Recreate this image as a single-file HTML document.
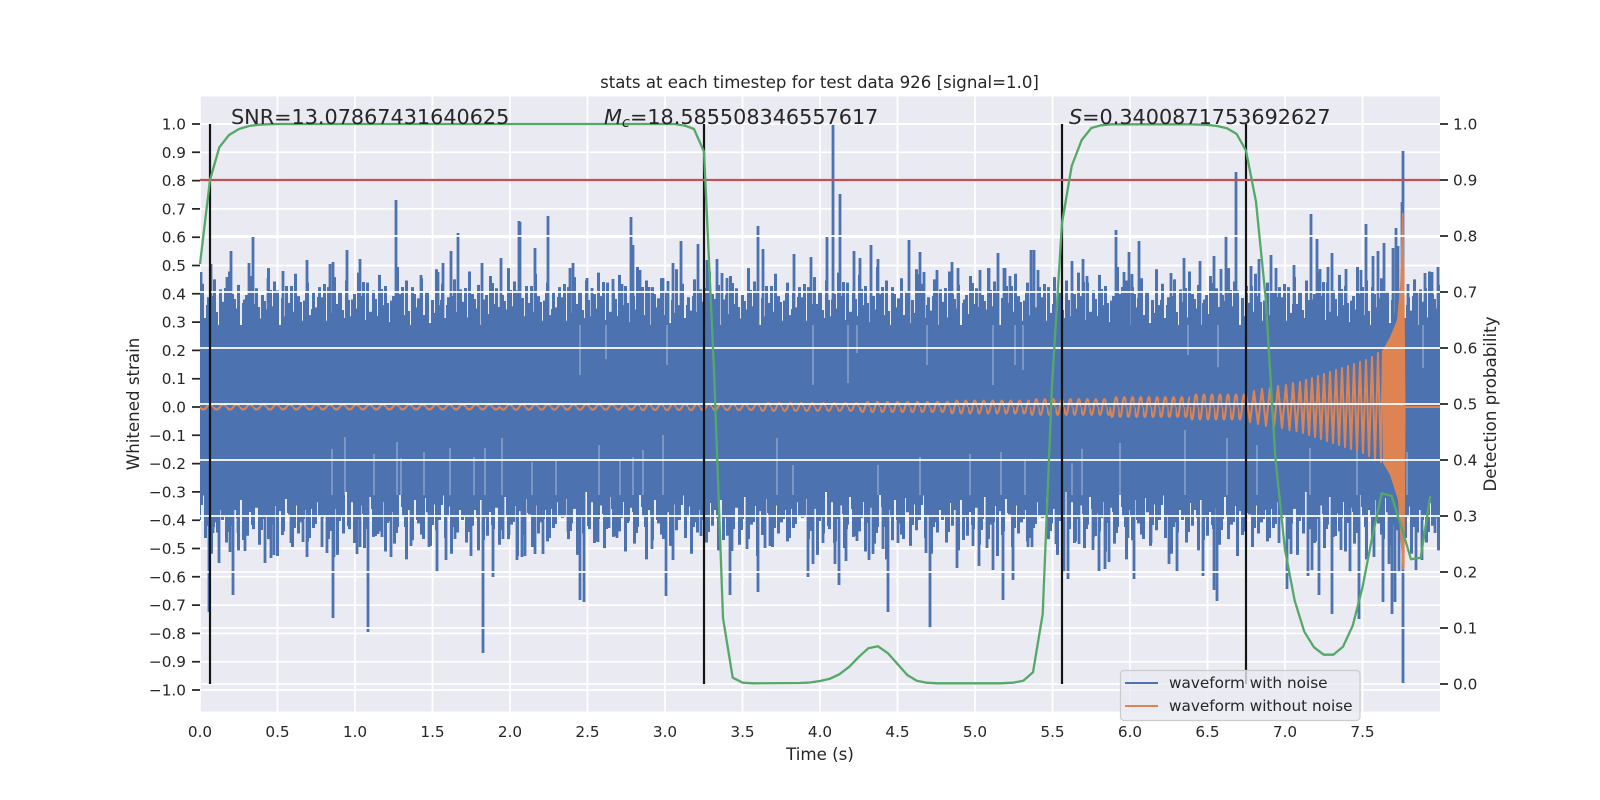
<!DOCTYPE html>
<html><head><meta charset="utf-8"><title>stats at each timestep</title>
<style>html,body{margin:0;padding:0;background:#fff}svg{display:block}text{font-family:"DejaVu Sans","Liberation Sans",sans-serif;fill:#262626}</style>
</head><body>
<svg xmlns="http://www.w3.org/2000/svg" width="1600" height="800" viewBox="0 0 1600 800">
<defs>
<clipPath id="ax"><rect x="200" y="96.5" width="1240" height="615"/></clipPath>
<path id="tt" d="M0 407V300h4V318h4V305h4V325h4V296h4V312h4V330h4V308h4V288h4V322h4V314h4V299h4V326h4V340h4V303h4V295h4V317h4V283h4V320h4V307h4V328h4V301h4V315h4V290h4V324h4V311h4V348h4V298h4V319h4V306h4V286h4V327h4V313h4V302h4V335h4V293h4V321h4V309h4V331h4V297h4V316h4V284h4V323h4V342h4V304h4V329h4V292h4V310h4V318h4V300h4V336h4V294h4V325h4V306h4V282h4V320h4V312h4V345h4V299h4V316h4V289h4V328h4V303h4V322h4V296h4V334h4V308h4V287h4V319h4V311h4V326h4V294h4V338h4V305h4V315h4V291h4V323h4V300h4V330h4V309h4V407z"/>
<path id="tb" d="M0 407V505h4V492h4V515h4V498h4V527h4V488h4V510h4V520h4V495h4V532h4V503h4V485h4V518h4V500h4V540h4V493h4V512h4V525h4V478h4V507h4V530h4V497h4V516h4V489h4V522h4V506h4V475h4V535h4V499h4V513h4V491h4V528h4V504h4V482h4V519h4V510h4V538h4V496h4V524h4V486h4V508h4V517h4V494h4V531h4V501h4V470h4V521h4V511h4V490h4V526h4V499h4V543h4V505h4V484h4V514h4V529h4V497h4V509h4V536h4V487h4V518h4V502h4V523h4V480h4V512h4V533h4V495h4V507h4V527h4V492h4V516h4V477h4V520h4V504h4V539h4V498h4V511h4V525h4V489h4V506h4V407z"/>
<g fill="none" stroke="#dd8452" stroke-width="2.08">
<pattern id="o1" patternUnits="userSpaceOnUse" x="200" y="367" width="13.3" height="80"><path d="M0 40q3.325 5 6.65 0t6.65 0"/></pattern>
<pattern id="o2" patternUnits="userSpaceOnUse" x="500" y="367" width="12.8" height="80"><path d="M0 40q3.2 5.4 6.4 0t6.4 0"/></pattern>
<pattern id="o3" patternUnits="userSpaceOnUse" x="640" y="367" width="12" height="80"><path d="M0 40q3 6 6 0t6 0"/></pattern>
<pattern id="o4" patternUnits="userSpaceOnUse" x="760" y="367" width="11" height="80"><path d="M0 40q2.75 7.6 5.5 0t5.5 0"/></pattern>
<pattern id="o5" patternUnits="userSpaceOnUse" x="860" y="367" width="10" height="80"><path d="M0 40q2.5 10 5 0t5 0"/></pattern>
<pattern id="o6" patternUnits="userSpaceOnUse" x="950" y="367" width="9" height="80"><path d="M0 40q2.25 13 4.5 0t4.5 0"/></pattern>
<pattern id="o7" patternUnits="userSpaceOnUse" x="1030" y="367" width="8.5" height="80"><path d="M0 40q2.125 16 4.25 0t4.25 0"/></pattern>
<pattern id="o8" patternUnits="userSpaceOnUse" x="1110" y="367" width="8.2" height="80"><path d="M0 40q2.05 20 4.1 0t4.1 0"/></pattern>
<pattern id="o9" patternUnits="userSpaceOnUse" x="1190" y="367" width="8" height="80"><path d="M0 40q2 25 4 0t4 0"/></pattern>
</g>
</defs>
<rect width="1600" height="800" fill="#fff"/>
<rect x="200" y="96.5" width="1240" height="615" fill="#eaeaf2"/>
<!-- left axes grid -->
<path stroke="#fff" stroke-width="1.74" fill="none" d="M200 96.5V711.5M277.5 96.5V711.5M355 96.5V711.5M432.5 96.5V711.5M510 96.5V711.5M587.5 96.5V711.5M665 96.5V711.5M742.5 96.5V711.5M820 96.5V711.5M897.5 96.5V711.5M975 96.5V711.5M1052.5 96.5V711.5M1130 96.5V711.5M1207.5 96.5V711.5M1285 96.5V711.5M1362.5 96.5V711.5M200 124H1440M200 152.3H1440M200 180.6H1440M200 208.9H1440M200 237.2H1440M200 265.5H1440M200 293.8H1440M200 322.1H1440M200 350.4H1440M200 378.7H1440M200 407H1440M200 435.3H1440M200 463.6H1440M200 491.9H1440M200 520.2H1440M200 548.5H1440M200 576.8H1440M200 605.1H1440M200 633.4H1440M200 661.7H1440M200 690H1440"/>
<g clip-path="url(#ax)">
<!-- noise waveform -->
<g fill="#4c72b0">
<use href="#tt" transform="translate(200,0) scale(.75,1)"/><use href="#tt" transform="translate(440,0) scale(.75,1)"/><use href="#tt" transform="translate(680,0) scale(.75,1)"/><use href="#tt" transform="translate(920,0) scale(.75,1)"/><use href="#tt" transform="translate(1160,0) scale(.75,1)"/><use href="#tt" transform="translate(1400,0) scale(.75,1)"/>
<use href="#tt" transform="translate(321,-48.84) scale(-.75,1.12)"/><use href="#tt" transform="translate(561,-48.84) scale(-.75,1.12)"/><use href="#tt" transform="translate(801,-48.84) scale(-.75,1.12)"/><use href="#tt" transform="translate(1041,-48.84) scale(-.75,1.12)"/><use href="#tt" transform="translate(1281,-48.84) scale(-.75,1.12)"/><use href="#tt" transform="translate(1521,-48.84) scale(-.75,1.12)"/>
<use href="#tb" transform="translate(200,0) scale(.75,1)"/><use href="#tb" transform="translate(440,0) scale(.75,1)"/><use href="#tb" transform="translate(680,0) scale(.75,1)"/><use href="#tb" transform="translate(920,0) scale(.75,1)"/><use href="#tb" transform="translate(1160,0) scale(.75,1)"/><use href="#tb" transform="translate(1400,0) scale(.75,1)"/>
<use href="#tb" transform="translate(321,-48.84) scale(-.75,1.12)"/><use href="#tb" transform="translate(561,-48.84) scale(-.75,1.12)"/><use href="#tb" transform="translate(801,-48.84) scale(-.75,1.12)"/><use href="#tb" transform="translate(1041,-48.84) scale(-.75,1.12)"/><use href="#tb" transform="translate(1281,-48.84) scale(-.75,1.12)"/><use href="#tb" transform="translate(1521,-48.84) scale(-.75,1.12)"/>
<rect x="200" y="325" width="1240" height="167"/>
</g>
<path stroke="#4c72b0" stroke-width="2.8" fill="none" d="M396 330V200M458 330V233M520 330V222M253 330V237M231 330V251M211 330V264M201 330V272M249 330V263M347 330V250M360 330V259M307 330V260M333 330V262M330 330V264M451 330V251M482 330V263M501 330V258M443 330V263M438 330V272M421 330V275M283 330V271M268 330V278M227 330V277M535 330V248M548 330V216M519 330V221M631 330V217M633 330V245M681 330V241M698 330V244M707 330V260M717 330V259M758 330V226M763 330V249M827 330V237M833 330V124M840 330V194M794 330V254M811 330V257M909 330V240M920 330V252M871 330V245M854 330V251M860 330V258M878 330V259M952 330V262M998 330V253M1031 330V250M1034 330V250M989 330V268M980 330V270M958 330V268M937 330V270M1004 330V268M924 330V272M918 330V274M722 330V273M727 330V278M573 330V263M570 330V268M587 330V278M592 330V288M613 330V279M622 330V284M640 330V270M673 330V263M668 330V281M649 330V287M663 330V278M1005 330V268M1010 330V276M1038 330V270M1072 330V261M1083 330V259M1087 330V276M1116 330V230M1129 330V252M1124 330V272M1132 330V274M1139 330V241M1171 330V273M1184 330V258M1200 330V261M1214 330V256M1226 330V235M1236 330V172M1221 330V269M1271 330V255M1259 330V259M1251 330V266M1276 330V268M1294 330V265M1311 330V214M1317 330V239M1320 330V269M1332 330V253M1328 330V267M1346 330V269M1361 330V270M1366 330V224M1373 330V256M1378 330V251M1384 330V243M1396 330V228M1398 330V246M1393 330V248M1403 330V151M1402 330V202M1425 330V273M1432 330V272M1438 330V267M1408 330V284M1417 330V293
M209 480V612M233 480V595M219 480V563M213 480V533M207 480V526M230 480V552M245 480V551M238 480V533M265 480V563M271 480V558M274 480V555M291 480V543M303 480V542M307 480V557M322 480V547M327 480V553M333 480V618M334 480V557M357 480V554M360 480V547M368 480V632M378 480V534M382 480V537M391 480V557M411 480V546M429 480V547M437 480V572M446 480V560M455 480V539M471 480V556M483 480V653M493 480V577M503 480V539M509 480V535M517 480V560M522 480V557M525 480V556M535 480V554M543 480V554M568 480V532M580 480V600M584 480V602M598 480V542M609 480V528M617 480V538M652 480V549M666 480V596M673 480V560M701 480V536M730 480V595M732 480V551M747 480V549M758 480V592M765 480V548M770 480V546M808 480V577M813 480V564M823 480V543M835 480V564M839 480V585M846 480V561M857 480V541M869 480V560M873 480V554M883 480V549M888 480V612M898 480V543M926 480V553M930 480V629M957 480V568M973 480V546M979 480V566M987 480V548M993 480V570M1003 480V600M1013 480V580M1028 480V547M1032 480V547M1056 480V544M1064 480V573M1068 480V579M1079 480V544M1093 480V550M1099 480V571M1105 480V569M1109 480V562M1128 480V538M1134 480V579M1151 480V543M1169 480V564M1177 480V571M1203 480V576M1217 480V601M1214 480V590M1279 480V543M1287 480V589M1291 480V554M1308 480V576M1312 480V570M1319 480V595M1332 480V614M1341 480V550M1350 480V573M1359 480V619M1374 480V557M1383 480V602M1389 480V564M1392 480V614M1395 480V602M1399 480V572M1403 480V683M1416 480V570M1422 480V560M1435 480V533"/>
<!-- pale notches in the band -->
<path stroke="#eaeaf2" stroke-opacity="0.6" stroke-width="1" fill="none" d="M332 495V449M345 495V437M374 495V454M397 495V442M401 495V458M424 495V452M450 495V448M474 495V457M485 495V448M502 495V438M532 495V462M556 495V460M599 495V445M620 495V460M633 495V457M643 495V450M663 495V435M777 495V438M793 495V465M878 495V465M920 495V457M970 495V454M1001 495V452M1025 495V459M1072 495V463M1185 495V430M1227 495V438M1082 495V449M1120 495V443M1257 495V445M1357 495V443M1310 495V448M1407 495V452M667 325V365M813 325V385M848 325V383M927 325V365M993 325V385M580 325V375M606 325V359M857 325V353M1023 325V370M1218 325V367M1188 325V355M1423 325V368M1015 325V365"/>
<!-- clean waveform -->
<g>
<rect x="200" y="367" width="300" height="80" fill="url(#o1)"/>
<rect x="500" y="367" width="140" height="80" fill="url(#o2)"/>
<rect x="640" y="367" width="120" height="80" fill="url(#o3)"/>
<rect x="760" y="367" width="100" height="80" fill="url(#o4)"/>
<rect x="860" y="367" width="90" height="80" fill="url(#o5)"/>
<rect x="950" y="367" width="80" height="80" fill="url(#o6)"/>
<rect x="1030" y="367" width="80" height="80" fill="url(#o7)"/>
<rect x="1110" y="367" width="80" height="80" fill="url(#o8)"/>
<rect x="1190" y="367" width="56" height="80" fill="url(#o9)"/>
</g>
<path fill="none" stroke="#dd8452" stroke-width="2.08" stroke-linejoin="round" d="M1246 393L1250 422 1254 391 1258 424 1262 389 1266 426 1270 388 1274 427 1278 386 1282 428 1286 385 1289.5 430 1293 383 1296.5 431 1300 382 1303 433 1306 380 1309 435 1312 378 1315 437 1318 376 1321 439 1324 374 1327 441 1330 372 1333 443 1336 370 1339 445 1342 368 1345 447 1348 366 1351 449 1354 364 1357 451 1360 362 1363 453 1366 360 1369 456 1372 357 1375 459 1378 353 1381 462 1383 350M1405 407H1440"/>
<path fill="#dd8452" d="M1383 350L1390 337 1397 320 1400 287 1402 213 1403.5 213 1404.5 290 1405.5 407 1405 500 1404.5 570 1402.5 570 1398 500 1390 475 1383 463Z"/>
</g>
<!-- right axes grid on top -->
<path stroke="#fff" stroke-width="1.74" fill="none" d="M200 124H1440M200 180H1440M200 236H1440M200 292H1440M200 348H1440M200 404H1440M200 460H1440M200 516H1440M200 572H1440M200 628H1440M200 684H1440"/>
<!-- black markers -->
<path stroke="#151515" stroke-width="2.2" fill="none" d="M210 124V684M704 124V684M1062 124V684M1246 124V684"/>
<!-- threshold -->
<path stroke="#c44e52" stroke-width="2.3" fill="none" d="M200 180H1440"/>
<!-- probability -->
<polyline fill="none" stroke="#55a868" stroke-width="2.3" stroke-linejoin="round" points="200,264 210,180 219.3,147.3 229,135 239,129 249,126 259,124.7 269,124.2 279,124 675,124 685,125.7 694,129 704,151.7 714,370 723,618 732.7,677.7 742.7,682.7 753,683.3 800,683 810,682.5 820,681 830,678.7 839.3,674.3 849.3,666.7 859,656.7 868.3,648.3 878,646.3 888,653.3 897.7,664.3 907.3,675 916.7,680.7 926.7,682.7 936.7,683.3 1000,683.3 1013,682.7 1023.3,680.7 1033,672.3 1042.7,614 1052,385 1062,223 1071.7,166 1081.7,140 1091.3,128 1101,125.3 1111,124.3 1190,124.3 1207,124.8 1217,126 1227,128.3 1236.7,134 1246,150.7 1256,201.7 1265.7,298.3 1275.3,456.7 1285,550 1294.7,600.7 1304.3,631.7 1314,647.3 1323.7,654.7 1333.3,654.7 1343,646.7 1352.7,625.7 1362.3,588.3 1372,538.3 1381.7,493.3 1391.7,496 1401.3,526.7 1411,559.3 1420.7,557.7 1430.3,496"/>
<!-- annotations -->
<g font-size="20.76">
<text x="231" y="124">SNR=13.07867431640625</text>
<text x="604" y="124"><tspan font-style="italic">M</tspan><tspan font-style="italic" font-size="14.6" dy="3">c</tspan><tspan dy="-3">=18.585508346557617</tspan></text>
<text x="1069" y="124"><tspan font-style="italic">S</tspan>=0.3400871753692627</text>
</g>
<!-- ticks -->
<path stroke="#262626" stroke-width="1.74" fill="none" d="M192 124h8M192 152.3h8M192 180.6h8M192 208.9h8M192 237.2h8M192 265.5h8M192 293.8h8M192 322.1h8M192 350.4h8M192 378.7h8M192 407h8M192 435.3h8M192 463.6h8M192 491.9h8M192 520.2h8M192 548.5h8M192 576.8h8M192 605.1h8M192 633.4h8M192 661.7h8M192 690h8M1440 124h8M1440 180h8M1440 236h8M1440 292h8M1440 348h8M1440 404h8M1440 460h8M1440 516h8M1440 572h8M1440 628h8M1440 684h8"/>
<g font-size="15.28" text-anchor="end">
<text x="186" y="129.5">1.0</text><text x="186" y="157.8">0.9</text><text x="186" y="186.1">0.8</text><text x="186" y="214.4">0.7</text><text x="186" y="242.7">0.6</text><text x="186" y="271">0.5</text><text x="186" y="299.3">0.4</text><text x="186" y="327.6">0.3</text><text x="186" y="355.9">0.2</text><text x="186" y="384.2">0.1</text><text x="186" y="412.5">0.0</text><text x="186" y="440.8">−0.1</text><text x="186" y="469.1">−0.2</text><text x="186" y="497.4">−0.3</text><text x="186" y="525.7">−0.4</text><text x="186" y="554">−0.5</text><text x="186" y="582.3">−0.6</text><text x="186" y="610.6">−0.7</text><text x="186" y="638.9">−0.8</text><text x="186" y="667.2">−0.9</text><text x="186" y="695.5">−1.0</text>
</g>
<g font-size="15.28">
<text x="1453" y="129.5">1.0</text><text x="1453" y="185.5">0.9</text><text x="1453" y="241.5">0.8</text><text x="1453" y="297.5">0.7</text><text x="1453" y="353.5">0.6</text><text x="1453" y="409.5">0.5</text><text x="1453" y="465.5">0.4</text><text x="1453" y="521.5">0.3</text><text x="1453" y="577.5">0.2</text><text x="1453" y="633.5">0.1</text><text x="1453" y="689.5">0.0</text>
</g>
<g font-size="15.28" text-anchor="middle">
<text x="200" y="737">0.0</text><text x="277.5" y="737">0.5</text><text x="355" y="737">1.0</text><text x="432.5" y="737">1.5</text><text x="510" y="737">2.0</text><text x="587.5" y="737">2.5</text><text x="665" y="737">3.0</text><text x="742.5" y="737">3.5</text><text x="820" y="737">4.0</text><text x="897.5" y="737">4.5</text><text x="975" y="737">5.0</text><text x="1052.5" y="737">5.5</text><text x="1130" y="737">6.0</text><text x="1207.5" y="737">6.5</text><text x="1285" y="737">7.0</text><text x="1362.5" y="737">7.5</text>
</g>
<g font-size="16.67" text-anchor="middle">
<text x="819.5" y="88" font-size="16.6">stats at each timestep for test data 926 [signal=1.0]</text>
<text x="820" y="760">Time (s)</text>
<text transform="translate(139,404) rotate(-90)">Whitened strain</text>
<text transform="translate(1496,404) rotate(-90)">Detection probability</text>
</g>
<!-- legend -->
<rect x="1120.5" y="670.5" width="239.5" height="50" rx="3.5" fill="#eaeaf2" fill-opacity="0.8" stroke="#cccccc" stroke-width="1.2"/>
<path stroke="#4c72b0" stroke-width="2.08" d="M1125 683H1158"/>
<path stroke="#dd8452" stroke-width="2.08" d="M1125 706H1158"/>
<g font-size="15.28">
<text x="1169" y="688">waveform with noise</text>
<text x="1169" y="711">waveform without noise</text>
</g>
</svg>
</body></html>
